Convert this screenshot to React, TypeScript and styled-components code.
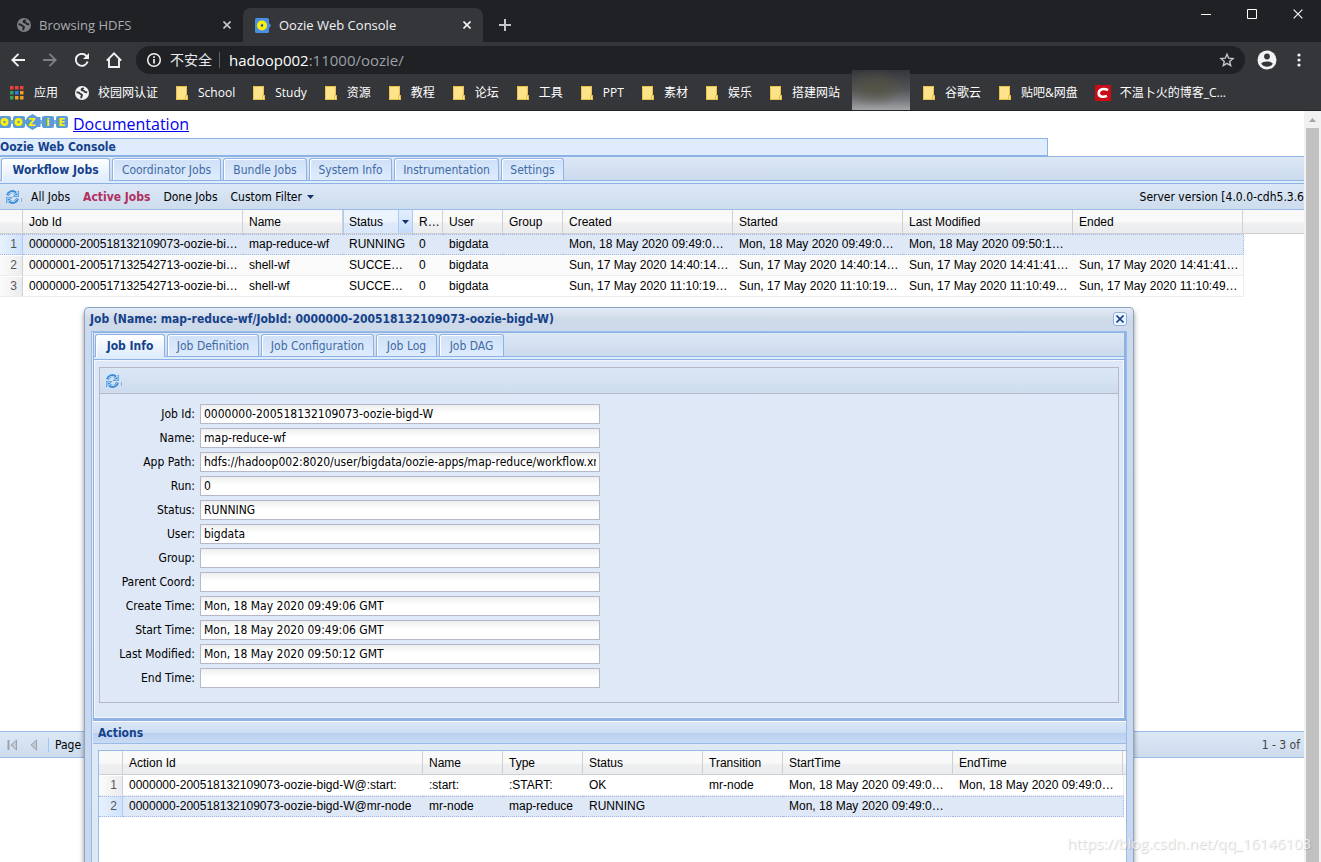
import React from "react";
import styled, { createGlobalStyle, css } from "styled-components";

const ui = `"Open Sans", "Noto Sans CJK SC", sans-serif`;
const tahoma = `"DejaVu Sans Condensed", "Noto Sans", sans-serif`;
const arial = `"Liberation Sans", Arial, sans-serif`;

const Global = createGlobalStyle`
  * { box-sizing: border-box; }
  body { margin: 0; overflow: hidden; background: #fff; }
  button, input { font: inherit; color: inherit; margin: 0; padding: 0; border: 0; background: none; border-radius: 0; }
  button { cursor: pointer; white-space: nowrap; }
  svg { display: block; flex: none; }
`;

const Screen = styled.div`
  height: 100vh;
  display: flex;
  flex-direction: column;
  overflow: hidden;
  position: relative;
`;

/* ---------- browser frame ---------- */

const TitleBar = styled.header`
  height: 42px;
  flex: none;
  display: flex;
  align-items: flex-end;
  background: #202124;
  font: 13px/18px ${ui};
`;

const BrowserTab = styled.div<{ $active?: boolean }>`
  height: 34px;
  width: ${(p) => (p.$active ? 240 : 243)}px;
  display: flex;
  align-items: center;
  gap: 8px;
  padding: 0 10px 0 ${(p) => (p.$active ? 12 : 17)}px;
  color: ${(p) => (p.$active ? "#f1f3f4" : "#a8abaf")};
  background: ${(p) => (p.$active ? "#35363a" : "transparent")};
  border-radius: 8px 8px 0 0;
`;

const TabTitle = styled.span`
  flex: 1;
  white-space: nowrap;
`;

const IconButton = styled.button<{ $w?: number }>`
  width: ${(p) => p.$w ?? 32}px;
  height: 28px;
  flex: none;
  display: flex;
  align-items: center;
  justify-content: center;
`;

const TabClose = styled(IconButton)`
  width: 12px;
`;

const NewTab = styled(IconButton)`
  width: 44px;
  height: 34px;
`;

const WindowControls = styled.div`
  margin-left: auto;
  align-self: flex-start;
  display: flex;
`;

const AddressRow = styled.div`
  height: 32px;
  flex: none;
  display: flex;
  align-items: center;
  padding: 4px 6px 0 2px;
  background: #35363a;
`;

const Omnibox = styled.form`
  flex: 1;
  height: 28px;
  display: flex;
  align-items: center;
  margin: 0 6px;
  padding: 0 10px;
  border-radius: 14px;
  background: #202124;
  color: #e8eaed;
  font: 14px/20px ${ui};
`;

const Insecure = styled.span`
  margin: 0 7px 0 8px;
`;

const Url = styled.div`
  flex: 1;
  padding-left: 9px;
  border-left: 1px solid #5f6368;
  color: #9aa0a6;
  font-size: 15px;
  line-height: 16px;
  b { font-weight: 400; color: #fff; }
`;

const Bookmarks = styled.nav`
  height: 37px;
  flex: none;
  display: flex;
  align-items: center;
  gap: 18px;
  padding: 1px 10px 0;
  background: #35363a;
  border-bottom: 1px solid #232427;
  font: 12px/18px ${ui};
`;

const Bookmark = styled.a`
  display: flex;
  align-items: center;
  gap: 10px;
  color: #fff;
  text-decoration: none;
  white-space: nowrap;
`;

const SiteBookmark = styled(Bookmark)`
  gap: 9px;
  margin-left: -1px;
`;

const Smudge = styled.div`
  width: 58px;
  height: 40px;
  margin: -5px -5px 0 -6px;
  background: radial-gradient(ellipse at 40% 45%, rgba(87, 84, 63, 0.8) 0%, rgba(87, 84, 63, 0) 60%),
    linear-gradient(#35363a 0%, #55565a 50%, #77787b 75%, #a4a5a8 100%);
`;

/* ---------- page ---------- */

const Viewport = styled.div`
  flex: 1;
  min-height: 0;
  display: flex;
`;

const Page = styled.main`
  flex: 1;
  min-width: 0;
  position: relative;
  overflow: hidden;
  background: #fff;
  font: 12px/16px ${tahoma};
`;

const Scrollbar = styled.div`
  width: 17px;
  flex: none;
  display: flex;
  flex-direction: column;
  align-items: center;
  background: #f1f1f1;
`;

const ScrollArrow = styled.div`
  height: 17px;
  display: flex;
  align-items: center;
`;

const ScrollThumb = styled.div`
  flex: 1;
  width: 13px;
  background: #c1c1c1;
`;

const LogoRow = styled.div`
  height: 27px;
  display: flex;
  align-items: center;
  gap: 5px;
  padding-bottom: 2px;
  font: 16px/24px ${ui};
  a { color: #0000ee; }
  svg { margin-bottom: 3px; }
`;

const Banner = styled.h1`
  width: 1048px;
  max-width: 100%;
  height: 18px;
  margin: 0;
  border: 1px solid #8db2e3;
  border-left: 0;
  background: #deecfd;
  color: #15428b;
  font: bold 12px/16px ${tahoma};
`;

const TabStrip = styled.div`
  height: 25px;
  display: flex;
  align-items: flex-end;
  gap: 2px;
  padding-left: 1px;
  border-top: 1px solid #8db2e3;
  border-bottom: 1px solid #8db2e3;
  background: linear-gradient(#dde8f5, #cbdaee);
`;

const Tab = styled.button<{ $w: number; $active?: boolean }>`
  width: ${(p) => p.$w}px;
  height: ${(p) => (p.$active ? 23 : 22)}px;
  border: 1px solid #8db2e3;
  border-bottom: 0;
  border-radius: 3px 3px 0 0;
  box-shadow: inset 1px 1px 0 #fff;
  line-height: 20px;
  color: #416aa3;
  background: linear-gradient(#cfe0f7, #deecfd);
  ${(p) =>
    p.$active &&
    css`
      margin-bottom: -1px;
      font-weight: bold;
      color: #15428b;
      background: linear-gradient(#fff, #deecfd);
    `}
`;

const StripSpacer = styled.div`
  height: 3px;
  background: #deecfd;
  border-bottom: 1px solid #8db2e3;
`;

const Toolbar = styled.div`
  height: 26px;
  display: flex;
  align-items: center;
  gap: 13px;
  padding-left: 5px;
  border-bottom: 1px solid #99bbe8;
  background: linear-gradient(#dbe7f5, #cddcee);
`;

const RefreshButton = styled.button`
  width: 18px;
  margin-right: -5px;
`;

const ToolButton = styled.button<{ $active?: boolean }>`
  display: flex;
  align-items: center;
  gap: 5px;
  ${(p) => p.$active && css`font-weight: bold; color: #b03060;`}
`;

const ServerVersion = styled.span`
  margin-left: auto;
  white-space: nowrap;
`;

const GridTable = styled.table<{ $w: number }>`
  width: ${(p) => p.$w}px;
  table-layout: fixed;
  border-collapse: separate;
  border-spacing: 0;
  font: 12px/15px ${arial};
`;

const GridHead = styled.div`
  height: 24px;
  overflow: hidden;
  border-bottom: 1px solid #d0d0d0;
  background: linear-gradient(#f9f9f9 50%, #eeeff1 60%, #ebecee);
`;

const HeadCell = styled.th<{ $hot?: boolean }>`
  height: 23px;
  padding: 2px 3px 0 6px;
  text-align: left;
  font-weight: 400;
  white-space: nowrap;
  overflow: hidden;
  text-overflow: ellipsis;
  border-right: 1px solid #d0d0d0;
  ${(p) =>
    p.$hot &&
    css`
      padding: 0 0 0 6px;
      border-right-color: #aaccf6;
      box-shadow: inset 1px 0 0 #aaccf6;
      background: linear-gradient(#ebf3fd 50%, #dce9fa 60%, #d9e8fb);
    `}
`;

const SortHead = styled.div`
  height: 23px;
  display: flex;
  align-items: center;
  justify-content: space-between;
  span { padding-top: 2px; }
`;

const HeadMenu = styled.button`
  width: 14px;
  height: 23px;
  display: flex;
  align-items: center;
  justify-content: center;
  border-left: 1px solid #aaccf6;
  background: linear-gradient(#e4effd, #c3dcfb);
`;

const Row = styled.tr<{ $selected?: boolean; $alt?: boolean }>`
  background: ${(p) => (p.$selected ? "#dfe8f6" : p.$alt ? "#fafafa" : "#fff")};
  td {
    border-top: 1px ${(p) => (p.$selected ? "dotted #a3bae9" : "solid #fff")};
    border-bottom: 1px ${(p) => (p.$selected ? "dotted #a3bae9" : "solid #ededed")};
  }
  td:last-child { border-right: 1px ${(p) => (p.$selected ? "dotted #a3bae9" : "solid #ededed")}; }
  td:first-child {
    border-right: 1px solid ${(p) => (p.$selected ? "#aaccf6" : "#d0d0d0")};
    background: ${(p) =>
      p.$selected ? "linear-gradient(90deg, #e6f1fd, #cfe2fb)" : "linear-gradient(90deg, #fbfbfb, #ebecee)"};
  }
`;

const Cell = styled.td`
  height: 21px;
  padding: 0 3px 0 6px;
  white-space: nowrap;
  overflow: hidden;
  text-overflow: ellipsis;
`;

const NumberCell = styled(Cell)`
  padding: 0 5px 0 0;
  text-align: right;
  color: #555;
`;

const JobsBody = styled.div`
  min-height: 521px;
`;

const Pager = styled.div`
  height: 27px;
  display: flex;
  align-items: center;
  gap: 5px;
  padding: 0 4px 0 5px;
  border-top: 1px solid #99bbe8;
  border-bottom: 1px solid #99bbe8;
  background: linear-gradient(#dbe7f5, #cddcee);
`;

const PagerButton = styled.button`
  width: 16px;
  height: 16px;
`;

const PagerRule = styled.span`
  width: 1px;
  height: 14px;
  margin: 0 1px;
  background: #98c8ff;
`;

const PagerInput = styled.input`
  width: 30px;
  height: 18px;
  padding-left: 3px;
  border: 1px solid #b5b8c8;
  background: #fff;
`;

const PagerStatus = styled.span`
  margin-left: auto;
  color: #444;
`;

/* ---------- job dialog ---------- */

const Dialog = styled.section`
  position: absolute;
  left: 84px;
  top: 196px;
  bottom: -10px;
  width: 1050px;
  display: flex;
  flex-direction: column;
  padding: 0 6px;
  border: 1px solid #8ba5c8;
  border-radius: 4px 4px 0 0;
  background: linear-gradient(#e3eaf4, #ced9e7 12px, #ccdaec 24px, #c9d8ee);
  box-shadow: 0 4px 5px rgba(0, 0, 0, 0.45);
`;

const DialogHeader = styled.div`
  height: 23px;
  flex: none;
  display: flex;
  align-items: center;
  justify-content: space-between;
  margin-left: -1px;
  padding-bottom: 2px;
`;

const DialogTitle = styled.h2`
  margin: 0;
  color: #15428b;
  font: bold 12px/16px ${tahoma};
`;

const DialogClose = styled.button`
  width: 14px;
  height: 14px;
  display: flex;
  align-items: center;
  justify-content: center;
  border: 1px solid #8fb1e2;
  border-radius: 3px;
  background: #eaf3ff;
`;

const DialogBody = styled.div`
  flex: 1;
  display: flex;
  flex-direction: column;
  border: 1px solid #99bbe8;
  background: #dfe8f6;
  padding: 0 0 0 1px;
`;

const InfoPanel = styled.div`
  border-left: 1px solid #8db2e3;
  border-right: 2px solid #8db2e3;
  border-bottom: 3px solid #8db2e3;
`;

const FormArea = styled.div`
  padding: 6px 4px 14px;
  border: 1px solid #f4f8fd;
`;

const FormFrame = styled.div`
  border: 1px solid #b5b8c8;
`;

const FormToolbar = styled(Toolbar)`
  border-bottom-color: #b5b8c8;
`;

const Fields = styled.form`
  display: flex;
  flex-direction: column;
  gap: 4px;
  padding: 10px 10px 14px;
`;

const Field = styled.label`
  display: grid;
  grid-template-columns: 85px 400px;
  gap: 5px;
  align-items: center;
  text-align: right;
  white-space: nowrap;
`;

const TextBox = styled.input`
  width: 400px;
  height: 20px;
  padding: 0 3px;
  border: 1px solid #b5b8c8;
  background: linear-gradient(#eceeee, #fff 8px);
`;

const ActionsTitle = styled.h3`
  height: 23px;
  flex: none;
  margin: 0;
  padding-left: 5px;
  border-top: 1px solid #fff;
  border-bottom: 1px solid #99bbe8;
  color: #15428b;
  font: bold 12px/22px ${tahoma};
  background: linear-gradient(#dae7f6, #cddef3 11px, #b7cff0 11px, #c9dbf3);
`;

const ActionsFrame = styled.div`
  flex: 1;
  margin: 6px 0 0 5px;
  border: 1px solid #99bbe8;
  border-right: 0;
  background: #fff;
`;

const Watermark = styled.div`
  position: absolute;
  right: 10px;
  bottom: 8px;
  color: rgba(250, 250, 250, 0.75);
  text-shadow: 1px 1px 1px rgba(110, 110, 110, 0.3);
  font: 15px/22px ${ui};
  pointer-events: none;
`;

/* ---------- drawings ---------- */

const Cross = ({ size = 8, color = "#f1f3f4", w = 1.6 }: { size?: number; color?: string; w?: number }) => (
  <svg width={size} height={size} viewBox="0 0 8 8">
    <path d="M.5.5 7.5 7.5M7.5.5.5 7.5" stroke={color} strokeWidth={w} fill="none" />
  </svg>
);

const Globe = ({ color, land }: { color: string; land: string }) => (
  <svg width="14" height="14" viewBox="0 0 14 14">
    <circle cx="7" cy="7" r="7" fill={color} />
    <path
      d="M1.600 6.200c1.600 0 2.800.4 3.300 1.300.5.8 1.600.6 2 1.400.3.8-.6 1.100-.6 2.100v1.200M8.400 1.700c-.2 1-1.800.9-1.900 2 0 1 2.400.5 2.800 1.600.4 1.200 1.600.8 2.900.9"
      stroke={land}
      strokeWidth="1.900"
      fill="none"
    />
  </svg>
);

const Folder = () => (
  <svg width="12" height="14" viewBox="0 0 12 14">
    <path d="M0 0h11v9.500h1V14H0z" fill="#ffe38a" />
    <path d="M.5.5h10v9M.5.5v13h11v-4h-2v4" stroke="#e8c04c" fill="none" />
  </svg>
);

const Apps = () => {
  const c = ["#ea4335", "#ea4335", "#ea4335", "#34a060", "#2d7ff0", "#f0a020", "#34a060", "#f0a020", "#f0a020"];
  return (
    <svg width="14" height="14" viewBox="0 0 14 14">
      {c.map((f, i) => (
        <rect key={i} x={(i % 3) * 5} y={Math.floor(i / 3) * 5} width="3.500" height="3.500" fill={f} />
      ))}
    </svg>
  );
};

const OozieFavicon = () => (
  <svg width="16" height="15" viewBox="0 0 16 15">
    <rect width="14" height="15" rx="1.500" fill="#4b8fe2" />
    <path d="M14 5l2 2.500-2 2.500z" fill="#4b8fe2" />
    <circle cx="7" cy="7.500" r="3.200" fill="none" stroke="#ffef00" strokeWidth="3.600" />
    <circle cx="7" cy="7.500" r="1" fill="#29539b" />
  </svg>
);

const OozieLogo = () => (
  <svg width="68" height="16" viewBox="0 0 68 16" fontFamily="DejaVu Sans" fontWeight="bold" fontSize="10">
    <path d="M9 8h50" stroke="#78aee2" strokeWidth="4" />
    <path d="M32.500 0l5 3h3v10h-3l-5 3-5-3-3-5 3-5z" fill="#5a9bd8" />
    {[-1, 13, 42, 56].map((x) => (
      <rect key={x} x={x} y="2" width="12" height="12" rx="2" fill="#5a9bd8" />
    ))}
    <g fill="#fff200" textAnchor="middle">
      <circle cx="4.500" cy="8" r="2.600" fill="none" stroke="#fff200" strokeWidth="2.800" />
      <circle cx="18.500" cy="8" r="2.600" fill="none" stroke="#fff200" strokeWidth="2.800" />
      <text x="32" y="12">Z</text>
      <text x="48" y="12">i</text>
      <text x="62" y="12">E</text>
    </g>
  </svg>
);

const Refresh = () => (
  <svg width="18" height="16" viewBox="0 0 18 16">
    <g fill="none" stroke="#3b8ad6" strokeWidth="3">
      <path d="M2.500 6.500C3.500 3 7.500 1.200 10.800 4" />
      <path d="M12.500 9.500c-1 3.500-5 5.300-8.300 2.500" />
    </g>
    <path d="M13.900 1.500v6.200H7.500z" fill="#3b8ad6" />
    <path d="M1.100 14.500V8.300h6.400z" fill="#3b8ad6" />
    <path d="M3 6.200C4 3.600 7.300 2.300 10.500 4.600l2.400-1.300v3.400H9.500M12 9.800c-1 2.600-4.300 3.900-7.500 1.600l-2.400 1.300V9.300h3.400" fill="none" stroke="#b5dcf8" />
    <path d="M16.500 9v4" stroke="#8db2e3" />
  </svg>
);

const Down = ({ color = "#15326b" }: { color?: string }) => (
  <svg width="7" height="4" viewBox="0 0 7 4">
    <path d="M0 0h7L3.500 4z" fill={color} />
  </svg>
);

const PageFirst = ({ bar }: { bar?: boolean }) => (
  <svg width="16" height="16" viewBox="0 0 16 16">
    {bar && <path d="M3.500 3v10" stroke="#9aa3ae" strokeWidth="2" />}
    <path d={bar ? "M11.500 3v10L6 8z" : "M10.500 3v10L5 8z"} fill="#c3c9d0" stroke="#9aa3ae" />
  </svg>
);

/* ---------- data ---------- */

const bookmarksLeft = ["School", "Study", "资源", "教程", "论坛", "工具", "PPT", "素材", "娱乐", "搭建网站"];
const bookmarksRight = ["谷歌云", "贴吧&网盘"];

const consoleTabs: [string, number][] = [
  ["Workflow Jobs", 109],
  ["Coordinator Jobs", 109],
  ["Bundle Jobs", 84],
  ["System Info", 83],
  ["Instrumentation", 105],
  ["Settings", 63],
];

const jobTabs: [string, number][] = [
  ["Job Info", 70],
  ["Job Definition", 92],
  ["Job Configuration", 113],
  ["Job Log", 61],
  ["Job DAG", 65],
];

const jobColumns: [string, number][] = [
  ["", 23],
  ["Job Id", 220],
  ["Name", 100],
  ["Status", 70],
  ["Run", 30],
  ["User", 60],
  ["Group", 60],
  ["Created", 170],
  ["Started", 170],
  ["Last Modified", 170],
  ["Ended", 170],
];

const jobs = [
  ["0000000-200518132109073-oozie-bigd-W", "map-reduce-wf", "RUNNING", "0", "bigdata", "", "Mon, 18 May 2020 09:49:06 GMT", "Mon, 18 May 2020 09:49:06 GMT", "Mon, 18 May 2020 09:50:12 GMT", ""],
  ["0000001-200517132542713-oozie-bigd-W", "shell-wf", "SUCCEEDED", "0", "bigdata", "", "Sun, 17 May 2020 14:40:14 GMT", "Sun, 17 May 2020 14:40:14 GMT", "Sun, 17 May 2020 14:41:41 GMT", "Sun, 17 May 2020 14:41:41 GMT"],
  ["0000000-200517132542713-oozie-bigd-W", "shell-wf", "SUCCEEDED", "0", "bigdata", "", "Sun, 17 May 2020 11:10:19 GMT", "Sun, 17 May 2020 11:10:19 GMT", "Sun, 17 May 2020 11:10:49 GMT", "Sun, 17 May 2020 11:10:49 GMT"],
];

const fields: [string, string][] = [
  ["Job Id", "0000000-200518132109073-oozie-bigd-W"],
  ["Name", "map-reduce-wf"],
  ["App Path", "hdfs://hadoop002:8020/user/bigdata/oozie-apps/map-reduce/workflow.xml"],
  ["Run", "0"],
  ["Status", "RUNNING"],
  ["User", "bigdata"],
  ["Group", ""],
  ["Parent Coord", ""],
  ["Create Time", "Mon, 18 May 2020 09:49:06 GMT"],
  ["Start Time", "Mon, 18 May 2020 09:49:06 GMT"],
  ["Last Modified", "Mon, 18 May 2020 09:50:12 GMT"],
  ["End Time", ""],
];

const actionColumns: [string, number][] = [
  ["", 24],
  ["Action Id", 300],
  ["Name", 80],
  ["Type", 80],
  ["Status", 120],
  ["Transition", 80],
  ["StartTime", 170],
  ["EndTime", 170],
];

const actions = [
  ["0000000-200518132109073-oozie-bigd-W@:start:", ":start:", ":START:", "OK", "mr-node", "Mon, 18 May 2020 09:49:06 GMT", "Mon, 18 May 2020 09:49:06 GMT"],
  ["0000000-200518132109073-oozie-bigd-W@mr-node", "mr-node", "map-reduce", "RUNNING", "", "Mon, 18 May 2020 09:49:06 GMT", ""],
];

type GridProps = {
  columns: [string, number][];
  rows: string[][];
  selected: number;
  hot?: string;
};

function Grid({ columns, rows, selected, hot }: GridProps) {
  const width = columns.reduce((sum, c) => sum + c[1], 0);
  const cols = (extra: number) => (
    <colgroup>
      {columns.map(([name, w], i) => (
        <col key={name} width={i === columns.length - 1 ? w + extra : w} />
      ))}
    </colgroup>
  );
  return (
    <>
      <GridHead>
        <GridTable $w={width}>
          {cols(0)}
          <thead>
            <tr>
              {columns.map(([name]) => (
                <HeadCell key={name} $hot={name === hot}>
                  {name === hot ? (
                    <SortHead>
                      <span>{name}</span>
                      <HeadMenu aria-label="Column menu">
                        <Down />
                      </HeadMenu>
                    </SortHead>
                  ) : (
                    name
                  )}
                </HeadCell>
              ))}
            </tr>
          </thead>
        </GridTable>
      </GridHead>
      <GridTable $w={width + 1}>
        {cols(1)}
        <tbody>
          {rows.map((row, r) => (
            <Row key={r} $selected={r === selected} $alt={r % 2 === 1}>
              <NumberCell>{r + 1}</NumberCell>
              {row.map((text, i) => (
                <Cell key={i}>{text}</Cell>
              ))}
            </Row>
          ))}
        </tbody>
      </GridTable>
    </>
  );
}

export default function App() {
  return (
    <Screen>
      <Global />
      <TitleBar>
        <BrowserTab>
          <Globe color="#7d8084" land="#202124" />
          <TabTitle>Browsing HDFS</TabTitle>
          <TabClose aria-label="Close tab">
            <Cross color="#c4c7ca" />
          </TabClose>
        </BrowserTab>
        <BrowserTab $active>
          <OozieFavicon />
          <TabTitle>Oozie Web Console</TabTitle>
          <TabClose aria-label="Close tab">
            <Cross />
          </TabClose>
        </BrowserTab>
        <NewTab aria-label="New tab">
          <svg width="12" height="12" viewBox="0 0 12 12">
            <path d="M6 0v12M0 6h12" stroke="#c4c7ca" strokeWidth="2" />
          </svg>
        </NewTab>
        <WindowControls>
          <IconButton $w={46} aria-label="Minimize">
            <svg width="10" height="10" viewBox="0 0 10 10">
              <path d="M0 5.500h10" stroke="#fff" />
            </svg>
          </IconButton>
          <IconButton $w={46} aria-label="Maximize">
            <svg width="10" height="10" viewBox="0 0 10 10">
              <path d="M.5.5h9v9h-9z" stroke="#fff" fill="none" />
            </svg>
          </IconButton>
          <IconButton $w={46} aria-label="Close">
            <Cross size={10} w={1} />
          </IconButton>
        </WindowControls>
      </TitleBar>

      <AddressRow>
        <IconButton aria-label="Back">
          <svg width="14" height="14" viewBox="0 0 14 14">
            <path d="M14 7H1.500M7.500.8 1.300 7l6.200 6.200" stroke="#f1f3f4" strokeWidth="1.800" fill="none" />
          </svg>
        </IconButton>
        <IconButton aria-label="Forward">
          <svg width="14" height="14" viewBox="0 0 14 14">
            <path d="M0 7h12.500M6.500.8 12.700 7l-6.200 6.200" stroke="#7d8084" strokeWidth="1.800" fill="none" />
          </svg>
        </IconButton>
        <IconButton aria-label="Reload">
          <svg width="14" height="14" viewBox="0 0 14 14">
            <path d="M12.600 8.500A6 6 0 1 1 11.300 2.800L13 4.500" stroke="#f1f3f4" strokeWidth="1.900" fill="none" />
            <path d="M14 0v6H8z" fill="#f1f3f4" />
          </svg>
        </IconButton>
        <IconButton aria-label="Home">
          <svg width="16" height="16" viewBox="0 0 16 16">
            <path d="M.8 8.700 8 1.400l7.200 7.300M3 7v8h10V7" stroke="#f1f3f4" strokeWidth="1.900" fill="none" />
          </svg>
        </IconButton>
        <Omnibox>
          <svg width="16" height="16" viewBox="0 0 16 16">
            <circle cx="8" cy="8" r="6.300" stroke="#f1f3f4" strokeWidth="1.500" fill="none" />
            <path d="M8 7v4.500M8 4.300v1.700" stroke="#f1f3f4" strokeWidth="1.700" />
          </svg>
          <Insecure>不安全</Insecure>
          <Url>
            <b>hadoop002</b>:11000/oozie/
          </Url>
          <svg width="16" height="16" viewBox="0 0 16 16">
            <path
              d="M8 2.200l1.700 4 4.300.4-3.300 2.800 1 4.200L8 11.400l-3.700 2.200 1-4.200L2 6.600l4.300-.4z"
              stroke="#c4c7ca"
              strokeWidth="1.400"
              fill="none"
            />
          </svg>
        </Omnibox>
        <IconButton aria-label="Profile">
          <svg width="20" height="20" viewBox="0 0 20 20">
            <circle cx="10" cy="10" r="9.500" fill="#f1f3f4" />
            <circle cx="10" cy="6.500" r="2.900" fill="#35363a" />
            <path d="M4.200 13.800c1.200-3 10.400-3 11.600 0-2.500 4-9.100 4-11.600 0z" fill="#35363a" />
          </svg>
        </IconButton>
        <IconButton aria-label="Menu">
          <svg width="4" height="14" viewBox="0 0 4 14">
            <circle cx="2" cy="2" r="1.600" fill="#f1f3f4" />
            <circle cx="2" cy="7" r="1.600" fill="#f1f3f4" />
            <circle cx="2" cy="12" r="1.600" fill="#f1f3f4" />
          </svg>
        </IconButton>
      </AddressRow>

      <Bookmarks>
        <Bookmark href="#">
          <Apps />
          应用
        </Bookmark>
        <SiteBookmark href="#">
          <Globe color="#f1f3f4" land="#35363a" />
          校园网认证
        </SiteBookmark>
        {bookmarksLeft.map((b) => (
          <Bookmark key={b} href="#">
            <Folder />
            {b}
          </Bookmark>
        ))}
        <Smudge />
        {bookmarksRight.map((b) => (
          <Bookmark key={b} href="#">
            <Folder />
            {b}
          </Bookmark>
        ))}
        <SiteBookmark href="#">
          <svg width="16" height="16" viewBox="0 0 16 16">
            <rect width="16" height="16" fill="#ca0c16" />
            <path d="M13 5.200C9 3 4 4 3.700 8c-.1 4 4.300 4.600 8.300 2.900" stroke="#fff" strokeWidth="2.600" fill="none" />
          </svg>
          不温卜火的博客_C...
        </SiteBookmark>
      </Bookmarks>

      <Viewport>
        <Page>
          <LogoRow>
            <OozieLogo />
            <a href="#">Documentation</a>
          </LogoRow>
          <Banner>Oozie Web Console</Banner>
          <TabStrip>
            {consoleTabs.map(([name, w], i) => (
              <Tab key={name} $w={w} $active={i === 0}>
                {name}
              </Tab>
            ))}
          </TabStrip>
          <StripSpacer />
          <Toolbar>
            <RefreshButton aria-label="Refresh">
              <Refresh />
            </RefreshButton>
            <ToolButton>All Jobs</ToolButton>
            <ToolButton $active>Active Jobs</ToolButton>
            <ToolButton>Done Jobs</ToolButton>
            <ToolButton>
              Custom Filter
              <Down />
            </ToolButton>
            <ServerVersion>Server version [4.0.0-cdh5.3.6</ServerVersion>
          </Toolbar>
          <JobsBody>
            <Grid columns={jobColumns} rows={jobs} selected={0} hot="Status" />
          </JobsBody>
          <Pager>
            <PagerButton aria-label="First page">
              <PageFirst bar />
            </PagerButton>
            <PagerButton aria-label="Previous page">
              <PageFirst />
            </PagerButton>
            <PagerRule />
            <label htmlFor="page">Page</label>
            <PagerInput id="page" defaultValue="1" />
            <PagerStatus>1 - 3 of</PagerStatus>
          </Pager>

          <Dialog>
            <DialogHeader>
              <DialogTitle>Job (Name: map-reduce-wf/JobId: 0000000-200518132109073-oozie-bigd-W)</DialogTitle>
              <DialogClose aria-label="Close">
                <Cross color="#15428b" />
              </DialogClose>
            </DialogHeader>
            <DialogBody>
              <InfoPanel>
                <TabStrip>
                  {jobTabs.map(([name, w], i) => (
                    <Tab key={name} $w={w} $active={i === 0}>
                      {name}
                    </Tab>
                  ))}
                </TabStrip>
                <StripSpacer />
                <FormArea>
                  <FormFrame>
                    <FormToolbar>
                      <RefreshButton aria-label="Refresh">
                        <Refresh />
                      </RefreshButton>
                    </FormToolbar>
                    <Fields>
                      {fields.map(([label, value]) => (
                        <Field key={label}>
                          {label}:
                          <TextBox readOnly value={value} />
                        </Field>
                      ))}
                    </Fields>
                  </FormFrame>
                </FormArea>
              </InfoPanel>
              <ActionsTitle>Actions</ActionsTitle>
              <ActionsFrame>
                <Grid columns={actionColumns} rows={actions} selected={1} />
              </ActionsFrame>
            </DialogBody>
          </Dialog>
        </Page>
        <Scrollbar>
          <ScrollArrow>
            <svg width="7" height="4" viewBox="0 0 7 4">
              <path d="M0 4h7L3.500 0z" fill="#a3a3a3" />
            </svg>
          </ScrollArrow>
          <ScrollThumb />
        </Scrollbar>
      </Viewport>
      <Watermark>https://blog.csdn.net/qq_16146103</Watermark>
    </Screen>
  );
}
